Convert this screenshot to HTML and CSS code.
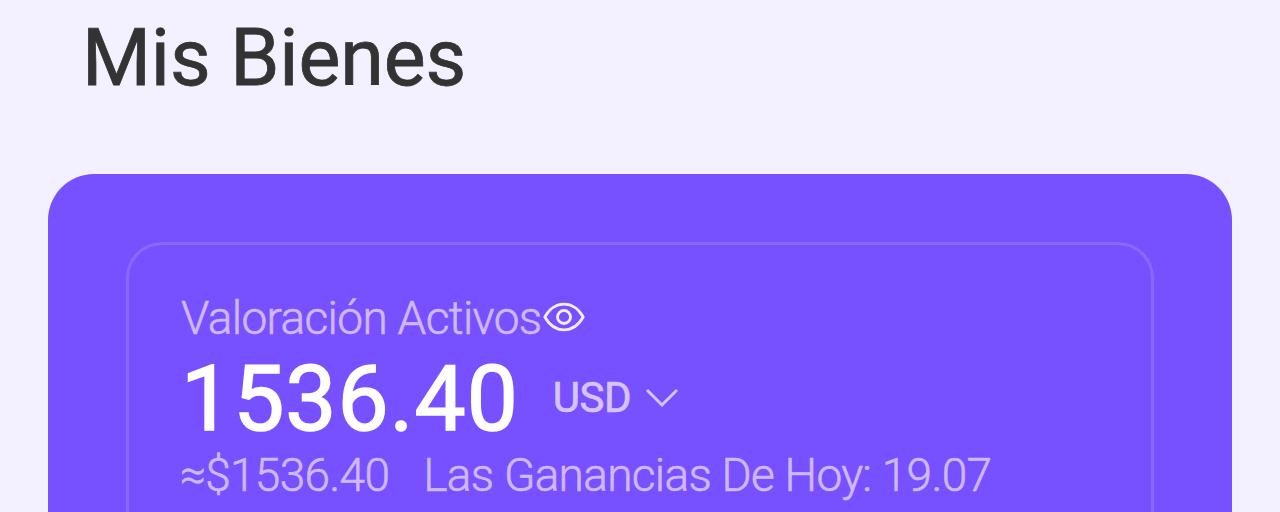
FILE: index.html
```html
<!DOCTYPE html>
<html lang="es">
<head>
  <meta charset="UTF-8">
  <meta name="viewport" content="width=device-width, initial-scale=1.0">
  <title>Mis Bienes</title>
  <link rel="stylesheet" href="styles.css">
</head>
<body>
<h1 class="title">Mis Bienes</h1>
<div class="card">
  <div class="panel">
    <div class="label">
      <span class="label-text">Valoración Activos</span>
      <svg class="eye" viewBox="0 0 42 32" fill="none" stroke="#f3edff" stroke-width="2.800" stroke-linejoin="round">
        <path d="M1.800 16C7 7 14 3.200 21 3.200S35 7 40.200 16C35 25 28 28.800 21 28.800S7 25 1.800 16Z"/>
        <circle cx="21" cy="16" r="6.500"/>
      </svg>
    </div>
    <div class="balance">
      <span class="amount">1536.40</span>
      <span class="currency">USD</span>
      <svg class="arrow" viewBox="0 0 34 22" fill="none" stroke="#d6c3ff" stroke-width="3">
        <path d="M2 3L17 18L32 3"/>
      </svg>
    </div>
    <div class="summary">
      <span class="approx">≈$1536.40</span>
      <span class="earnings">Las Ganancias De Hoy: 19.07</span>
    </div>
  </div>
</div>
</body>
</html>
```

FILE: styles.css
```css
body {
  margin: 0;
  height: 512px;
  display: flex;
  flex-direction: column;
  background-color: #f3f0ff;
  font-family: Roboto, sans-serif;
}
.title {
  box-sizing: border-box;
  flex: none;
  margin: 0;
  padding: 12px 0 0 82px;
  height: 174px;
  font-size: 79px;
  line-height: 92px;
  font-weight: 400;
  letter-spacing: -0.1px;
  color: #333;
  -webkit-text-stroke: 0.8px #333;
}
.card {
  flex: 1;
  display: flex;
  margin: 0 48px;
  padding: 67.5px 78px 0;
  border-radius: 46px 46px 0 0;
  background-color: #7751ff;
}
.panel {
  flex: 1;
  padding: 45px 51px 0 52px;
  border: 3px solid #8b69ff;
  border-bottom: none;
  border-radius: 36px 36px 0 0;
  white-space: nowrap;
}
.label,
.balance,
.summary {
  display: flex;
}
.label {
  height: 56px;
  align-items: center;
  color: #d0b8ff;
}
.label-text {
  font-size: 46px;
  font-weight: 300;
  letter-spacing: -0.65px;
  -webkit-text-stroke: 0.6px #d0b8ff;
}
.eye {
  width: 42px;
  height: 32px;
  margin: 0 0 2px 1px;
}
.balance {
  height: 104px;
  align-items: center;
  color: #fff;
}
.amount {
  margin-top: 2px;
  font-size: 91px;
  font-weight: 400;
  letter-spacing: 1px;
  -webkit-text-stroke: 1.6px #fff;
}
.currency {
  margin-left: 34px;
  font-size: 42px;
  font-weight: 400;
  letter-spacing: -0.5px;
  color: #d6c3ff;
  -webkit-text-stroke: 0.7px #d6c3ff;
}
.arrow {
  width: 34px;
  height: 22px;
  margin-left: 14px;
}
.summary {
  height: 50px;
  align-items: center;
  font-size: 46px;
  font-weight: 300;
  letter-spacing: -0.7px;
  color: #d0b8ff;
  -webkit-text-stroke: 0.6px #d0b8ff;
}
.approx {
  margin-left: -1px;
}
.earnings {
  margin-left: 34px;
}
```
